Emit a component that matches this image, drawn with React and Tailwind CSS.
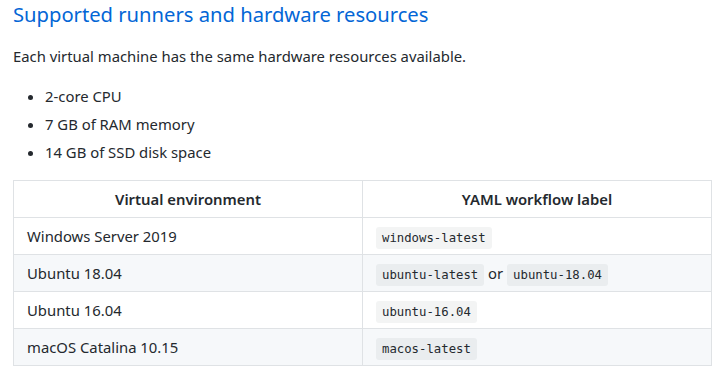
import React from "react";

const rows = [
  { env: "Windows Server 2019", labels: ["windows-latest"] },
  { env: "Ubuntu 18.04", labels: ["ubuntu-latest", "ubuntu-18.04"] },
  { env: "Ubuntu 16.04", labels: ["ubuntu-16.04"] },
  { env: "macOS Catalina 10.15", labels: ["macos-latest"] },
];

function Code({ children }) {
  return (
    <code className="rounded-[3px] bg-[rgba(27,31,35,0.05)] px-[6px] py-[4px] font-['DejaVu_Sans_Mono',monospace] text-[12.3px] leading-none">
      {children}
    </code>
  );
}

export default function App() {
  return (
    <div className="min-h-screen bg-white px-[13px] font-['Noto_Sans',sans-serif] text-[#24292e]">
      {/* Section heading */}
      <h2 className="text-[20.2px] leading-[29px] text-[#0366d6]">
        Supported runners and hardware resources
      </h2>

      <p className="mt-[15px] text-[14.85px] leading-[24px]">
        Each virtual machine has the same hardware resources available.
      </p>

      <ul className="mt-[16px] list-disc pl-[32px] text-[14.85px] leading-[24px]">
        <li>2-core CPU</li>
        <li className="mt-[4px]">7 GB of RAM memory</li>
        <li className="mt-[4px]">14 GB of SSD disk space</li>
      </ul>

      {/* Runner table */}
      <table className="mt-[16px] w-[699px] border-collapse text-[14.85px] leading-[24px]">
        <thead>
          <tr>
            <th className="h-[37px] w-1/2 border border-[#dfe2e5] px-[13px] py-0 font-semibold">
              Virtual environment
            </th>
            <th className="h-[37px] border border-[#dfe2e5] px-[13px] py-0 font-semibold">
              YAML workflow label
            </th>
          </tr>
        </thead>
        <tbody>
          {rows.map((row, i) => (
            <tr key={row.env} className={i % 2 === 1 ? "bg-[#f6f8fa]" : "bg-white"}>
              <td className="h-[37px] border border-[#dfe2e5] px-[13px] py-0">{row.env}</td>
              <td className="h-[37px] border border-[#dfe2e5] px-[13px] py-0">
                <Code>{row.labels[0]}</Code>
                {row.labels[1] && (
                  <>
                    {" or "}
                    <Code>{row.labels[1]}</Code>
                  </>
                )}
              </td>
            </tr>
          ))}
        </tbody>
      </table>
    </div>
  );
}
